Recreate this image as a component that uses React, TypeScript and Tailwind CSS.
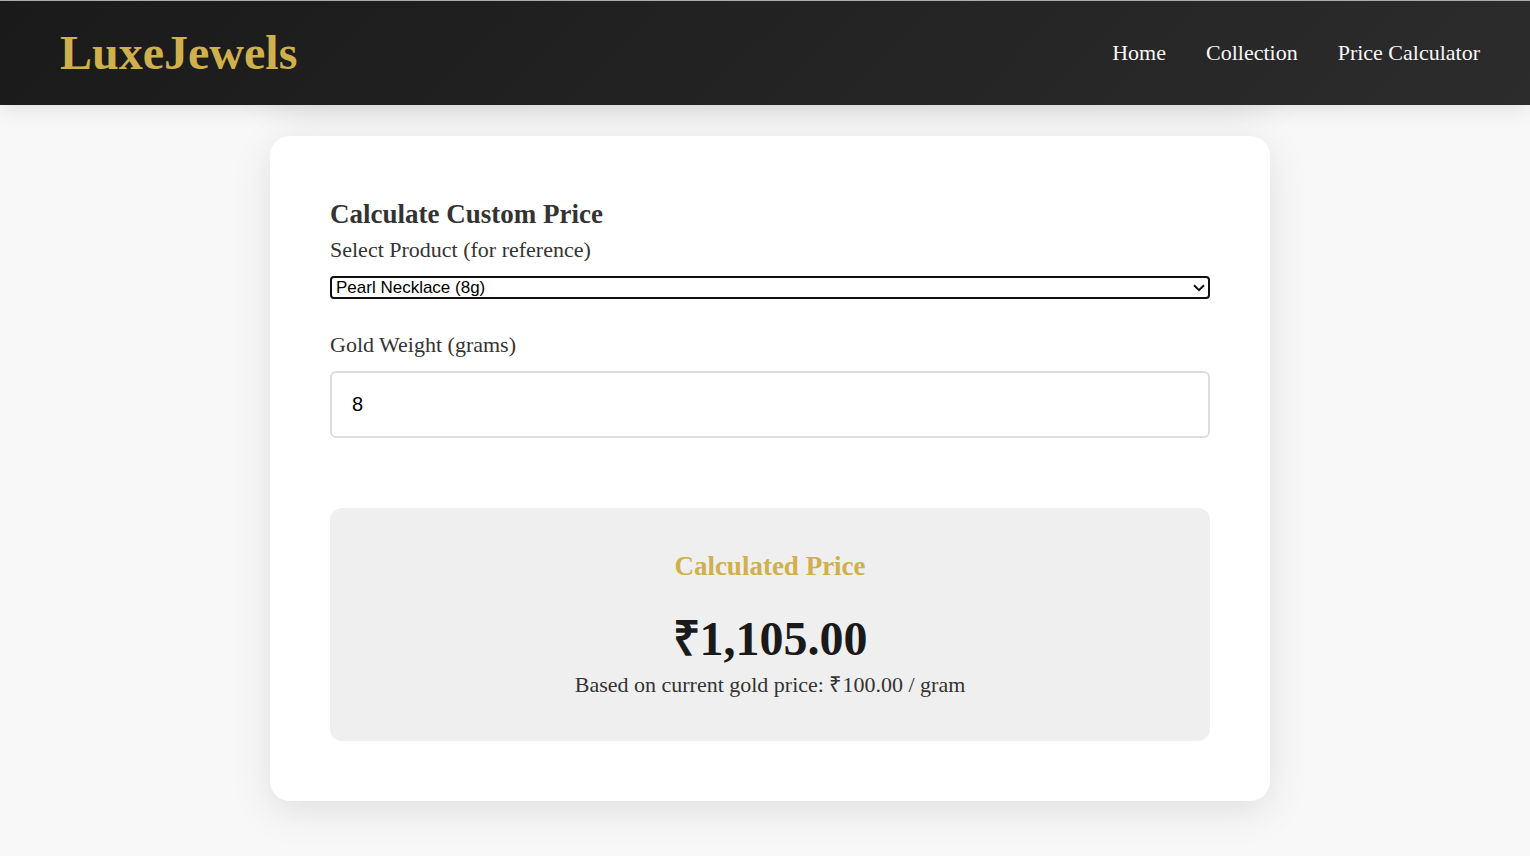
import { useState } from "react";

const links = [
  { label: "Home", href: "#home" },
  { label: "Collection", href: "#collection" },
  { label: "Price Calculator", href: "#calculator" },
];

const products = [
  { name: "Gold Ring", grams: 5 },
  { name: "Pearl Necklace", grams: 8 },
  { name: "Diamond Bracelet", grams: 12 },
];

const cardClass =
  "mx-auto w-full max-w-[1000px] rounded-[20px] bg-white shadow-[0_10px_40px_rgba(0,0,0,0.1)]";

function Header() {
  return (
    <header className="sticky top-0 z-10 flex items-center justify-between border-t border-[#a9adad] bg-linear-135 from-[#1a1a1a] to-[#2c2c2c] py-[22px] pr-[50px] pl-[60px] shadow-[0_4px_20px_rgba(0,0,0,0.1)]">
      <a href="#home" className="text-[48px] leading-[60px] font-bold text-[#d0b04c]">
        LuxeJewels
      </a>
      <nav className="flex gap-10">
        {links.map((link) => (
          <a key={link.href} href={link.href} className="text-[22px] leading-8 text-[#f8f8f8]">
            {link.label}
          </a>
        ))}
      </nav>
    </header>
  );
}

function Calculator() {
  const [grams, setGrams] = useState(8);
  const price = (grams * 100 * 1.3 + 65).toLocaleString("en-IN", { minimumFractionDigits: 2 });

  return (
    <section id="calculator" className={`${cardClass} p-[60px]`}>
      <h2 className="text-[27px] leading-9 font-bold">Calculate Custom Price</h2>
      <label htmlFor="product" className="block text-[22px] leading-9">
        Select Product (for reference)
      </label>
      <div className="relative mt-2">
        <select
          id="product"
          value={grams}
          onChange={(e) => setGrams(Number(e.target.value))}
          className="block h-[23px] w-full appearance-none rounded-[4px] border-2 border-[#101010] bg-white pl-[4px] font-['Liberation_Sans',sans-serif] text-[17px] leading-[19px] text-black outline-none"
        >
          {products.map((p) => (
            <option key={p.name} value={p.grams}>
              {p.name} ({p.grams}g)
            </option>
          ))}
        </select>
        <svg
          className="pointer-events-none absolute top-[8px] right-[5px]"
          width="12"
          height="8"
          viewBox="0 0 12 8"
          fill="none"
          stroke="#101010"
          strokeWidth="2"
          aria-hidden="true"
        >
          <path d="M1 1.2 6 6.2 11 1.2" />
        </svg>
      </div>
      <label htmlFor="weight" className="mt-7 block text-[22px] leading-9">
        Gold Weight (grams)
      </label>
      <input
        id="weight"
        type="text"
        inputMode="decimal"
        value={grams}
        onChange={(e) => setGrams(Number(e.target.value) || 0)}
        className="mt-2 block h-[67px] w-full rounded-[6px] border-2 border-[#dddddd] bg-white px-5 font-['Liberation_Sans',sans-serif] text-[20px] text-black outline-none"
      />
      <div className="mt-[70px] rounded-[12px] bg-[#efefef] p-10 text-center">
        <h3 className="text-[27px] leading-9 font-bold text-[#d0b04c]">Calculated Price</h3>
        <p className="mt-[25px] text-[48px] leading-[60px] font-bold text-[#1a1a1a]">
          <span className="font-['Liberation_Sans',sans-serif]">₹</span>
          {price}
        </p>
        <p className="text-[22px] leading-8">Based on current gold price: ₹100.00 / gram</p>
      </div>
    </section>
  );
}

export default function App() {
  return (
    <div className="min-h-screen bg-[#f8f8f8] font-[Georgia,'Liberation_Serif',serif] text-[#333333]">
      <Header />
      <main className="-mt-12 flex flex-col gap-10 pr-5 pb-[55px] pl-[30px]">
        <div className={`${cardClass} h-[39px]`} />
        <Calculator />
      </main>
    </div>
  );
}
